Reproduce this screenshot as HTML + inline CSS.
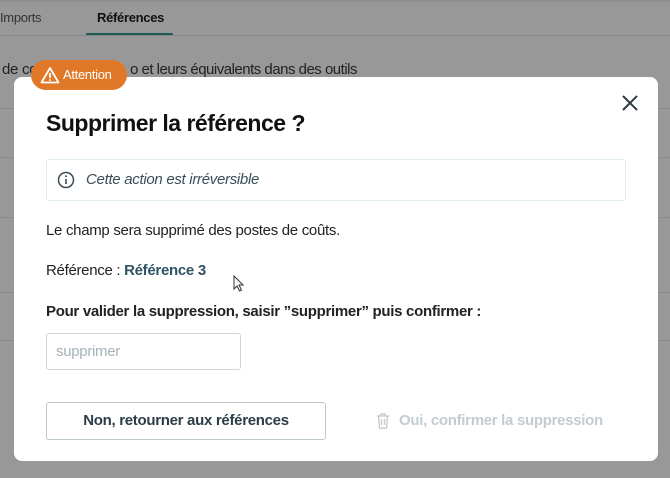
<!DOCTYPE html>
<html><head><meta charset="utf-8"><style>
*{margin:0;padding:0;box-sizing:border-box}
body{width:670px;height:478px;overflow:hidden;background:#989898;font-family:"Liberation Sans",sans-serif;position:relative;letter-spacing:-0.3px}
.a{position:absolute}
</style></head><body>
<div class="a" style="left:0;top:0;width:670px;height:2px;background:#8f8f8f"></div>
<div class="a" style="left:0;top:10px;font-size:13px;color:#333">Imports</div>
<div class="a" style="left:97px;top:10px;font-size:13px;font-weight:bold;color:#111">Références</div>
<div class="a" style="left:86px;top:33px;width:87px;height:3px;background:#1e5a52;border-radius:2px"></div>
<div class="a" style="left:0;top:35px;width:670px;height:1px;background:#7f8a8a"></div>
<div class="a" style="left:2px;top:61px;font-size:15px;color:#222">de co</div>
<div class="a" style="left:130px;top:61px;font-size:15px;color:#222;letter-spacing:-0.5px">o et leurs équivalents dans des outils</div>
<div class="a" style="left:0;top:108px;width:670px;height:1px;background:#8a8a8a"></div>
<div class="a" style="left:0;top:157px;width:670px;height:1px;background:#8a8a8a"></div>
<div class="a" style="left:0;top:217px;width:670px;height:1px;background:#8a8a8a"></div>
<div class="a" style="left:0;top:292px;width:670px;height:1px;background:#8a8a8a"></div>
<div class="a" style="left:0;top:340px;width:670px;height:1px;background:#8a8a8a"></div>
<div class="a" style="left:14px;top:77px;width:644px;height:384px;background:#fff;border-radius:8px"></div>
<div class="a" style="left:31px;top:60px;width:96px;height:30px;background:#e07828;border-radius:15px;color:#fff;font-size:13px;line-height:30px;padding-left:32px">Attention</div>
<svg class="a" style="left:40px;top:66px" width="20" height="18" viewBox="0 0 20 18"><path d="M10 2L18.5 16.5H1.5Z" fill="none" stroke="#fff" stroke-width="1.8" stroke-linejoin="round"/><path d="M10 7v5" stroke="#fff" stroke-width="1.8"/><circle cx="10" cy="14" r="1" fill="#fff"/></svg>
<svg class="a" style="left:621px;top:94px" width="18" height="18" viewBox="0 0 18 18"><path d="M2 2L16 16M16 2L2 16" stroke="#2a3a3f" stroke-width="2"/></svg>
<div class="a" style="left:46px;top:110px;font-size:23px;font-weight:bold;color:#111;letter-spacing:-0.5px">Supprimer la référence ?</div>
<div class="a" style="left:46px;top:159px;width:580px;height:42px;border:1px solid #e2edf0;border-radius:3px"></div>
<svg class="a" style="left:57px;top:171px" width="18" height="18" viewBox="0 0 18 18"><circle cx="9" cy="9" r="7.5" fill="none" stroke="#3a4e58" stroke-width="1.5"/><path d="M9 8v5" stroke="#3a4e58" stroke-width="1.6"/><circle cx="9" cy="5.3" r="1" fill="#3a4e58"/></svg>
<div class="a" style="left:86px;top:171px;font-size:15px;font-style:italic;color:#3a4e58">Cette action est irréversible</div>
<div class="a" style="left:46px;top:222px;font-size:15px;color:#222">Le champ sera supprimé des postes de coûts.</div>
<div class="a" style="left:46px;top:262px;font-size:15px;color:#222">Référence : <b style="color:#2f5465">Référence 3</b></div>
<div class="a" style="left:46px;top:303px;font-size:15px;font-weight:bold;color:#222">Pour valider la suppression, saisir ”supprimer” puis confirmer :</div>
<div class="a" style="left:46px;top:333px;width:195px;height:37px;border:1px solid #cdd6da;border-radius:3px;font-size:15px;color:#a4b2b8;line-height:35px;padding-left:9px">supprimer</div>
<div class="a" style="left:46px;top:402px;width:280px;height:38px;border:1px solid #bcc8cd;border-radius:3px;font-size:15px;font-weight:bold;color:#2b3e48;line-height:36px;text-align:center">Non, retourner aux références</div>
<svg class="a" style="left:375px;top:412px" width="16" height="18" viewBox="0 0 16 18"><path d="M2 4h12M6 4V2h4v2M3.5 4l1 12h7l1-12M6.5 7v6M9.5 7v6" fill="none" stroke="#c3ccd0" stroke-width="1.4"/></svg>
<div class="a" style="left:399px;top:412px;font-size:15px;font-weight:bold;color:#c3ccd0">Oui, confirmer la suppression</div>
<svg class="a" style="left:233px;top:275px" width="12" height="18" viewBox="0 0 12 18"><path d="M1 1v13l3-3 2.5 5 2-1-2.5-5h4z" fill="#fff" stroke="#333" stroke-width="1"/></svg>
</body></html>
